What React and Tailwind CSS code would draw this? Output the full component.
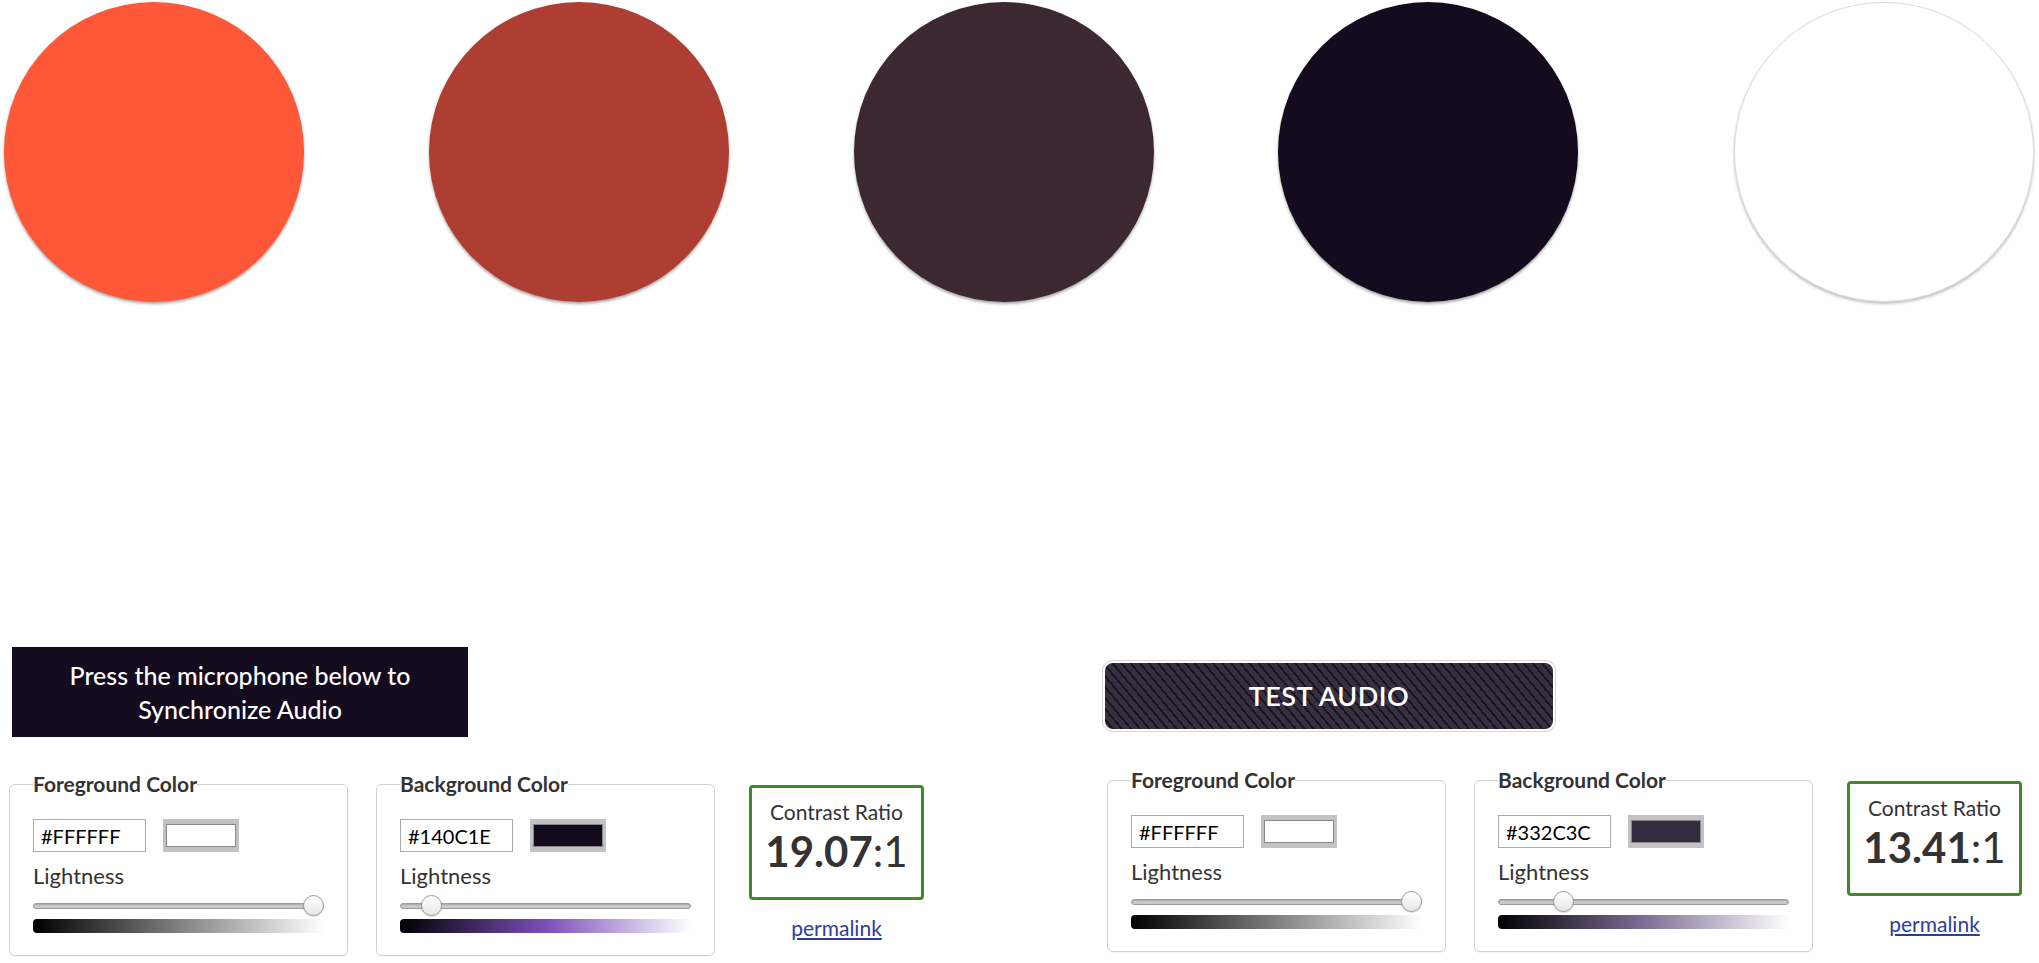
import React from 'react';

const swatches = [
  { color: '#ff5839', gap: 'ml-0' },
  { color: '#ae3e31', gap: 'ml-[125px]' },
  { color: '#3c2831', gap: 'ml-[125px]' },
  { color: '#140c1e', gap: 'ml-[124px]' },
  { color: '#ffffff', gap: 'ml-[156px]', light: true },
];

const panels = [
  {
    fg: { hex: '#FFFFFF', fill: '#ffffff', value: 1, mid: '#808080' },
    bg: { hex: '#140C1E', fill: '#140c1e', value: 0.079, mid: '#7b4fba' },
    ratio: '19.07',
  },
  {
    fg: { hex: '#FFFFFF', fill: '#ffffff', value: 1, mid: '#808080' },
    bg: { hex: '#332C3C', fill: '#332c3c', value: 0.204, mid: '#7e6d95' },
    ratio: '13.41',
  },
];

const Lightness = ({ value, mid }) => (
  <div className="mt-[6px]">
    <div className="relative h-[21px] flex items-center">
      <div className="h-[6px] w-full rounded-full bg-[#c9c9c9] border border-[#9c9c9c] shadow-[inset_0_1px_1px_rgba(0,0,0,0.15)]" />
      <div
        className="absolute top-0 w-[21px] h-[21px] rounded-full border border-[#9a9a9a] bg-[linear-gradient(to_bottom,#ffffff,#e6e6e6)] shadow-[0_1px_1px_rgba(0,0,0,0.15)]"
        style={{ left: `calc((100% - 21px) * ${value})` }}
      />
    </div>
    <div
      className="mt-[3px] h-[14px] rounded-[4px]"
      style={{ background: `linear-gradient(to right, #000000, ${mid}, #ffffff)` }}
    />
  </div>
);

const ColorField = ({ label, hex, fill, value, mid }) => (
  <fieldset className="w-[339px] shrink-0 border border-[#d0d0d0] rounded-[6px] px-[23px] pt-[23px] pb-[22px] shadow-[0_1px_1px_rgba(0,0,0,0.05)]">
    <legend className="p-0 text-[21px] leading-6 font-bold text-[#333]">{label}</legend>
    <div className="flex items-center gap-[17px]">
      <input
        readOnly
        value={hex}
        className="w-[113px] h-[33px] border border-[#aaaaaa] pl-[7px] text-[20px] text-black bg-white outline-none"
      />
      <div className="w-[76px] h-[33px] bg-[#c2c2c2] px-[3px] py-[5px]">
        <div className="h-full border border-[#888888]" style={{ backgroundColor: fill }} />
      </div>
    </div>
    <p className="mt-[11px] text-[22px] leading-[26px] text-[#333]">Lightness</p>
    <Lightness value={value} mid={mid} />
  </fieldset>
);

const ControlRow = ({ fg, bg, ratio }) => (
  <div className="flex items-start gap-[28px]">
    <ColorField label="Foreground Color" {...fg} />
    <ColorField label="Background Color" {...bg} />
    <div className="ml-[6px] mt-[13px] flex flex-col items-center">
      <div className="w-[175px] h-[115px] border-[3px] border-[#3f8b2a] rounded-[4px] flex flex-col items-center pt-[10px] text-[#333]">
        <p className="text-[21px] leading-[28px]">Contrast Ratio</p>
        <p className="text-[42px] leading-[50px]">
          <span className="font-bold">{ratio}</span>:1
        </p>
      </div>
      <a href="#" className="mt-[16px] text-[21px] leading-6 text-[#2b3ea0] underline">
        permalink
      </a>
    </div>
  </div>
);

export default function App() {
  return (
    <div className="min-h-screen w-full bg-white font-[family-name:Lato,sans-serif]">
      {/* paleta */}
      <div className="flex pl-[4px] pt-[2px]">
        {swatches.map((s) => (
          <div
            key={s.color}
            className={`${s.gap} w-[300px] h-[300px] shrink-0 rounded-full ${
              s.light
                ? 'border border-[#dcdcdc] shadow-[0_2px_3px_rgba(0,0,0,0.25)]'
                : 'shadow-[0_2px_3px_rgba(0,0,0,0.35)]'
            }`}
            style={{ backgroundColor: s.color }}
          />
        ))}
      </div>

      {/* controles */}
      <div className="flex mt-[345px] pl-[9px]">
        <div className="w-[1094px] shrink-0">
          <div className="ml-[3px] w-[456px] h-[90px] bg-[#140c1e] text-white text-center text-[25px] leading-[34px] font-medium flex flex-col items-center justify-center">
            <span>Press the microphone below to</span>
            <span>Synchronize Audio</span>
          </div>
          <div className="mt-[35px]">
            <ControlRow {...panels[0]} />
          </div>
        </div>
        <div className="pt-[14px]">
          <button className="w-[452px] h-[70px] rounded-[10px] border-2 border-white shadow-[0_0_0_1px_#d4d4d4] bg-[image:repeating-linear-gradient(50deg,#363040_0px,#363040_5px,#1a1621_5px,#1a1621_7px)] text-white text-[27px] font-semibold tracking-[0.5px]">
            TEST AUDIO
          </button>
          <div className="mt-[37px] ml-[4px]">
            <ControlRow {...panels[1]} />
          </div>
        </div>
      </div>
    </div>
  );
}
